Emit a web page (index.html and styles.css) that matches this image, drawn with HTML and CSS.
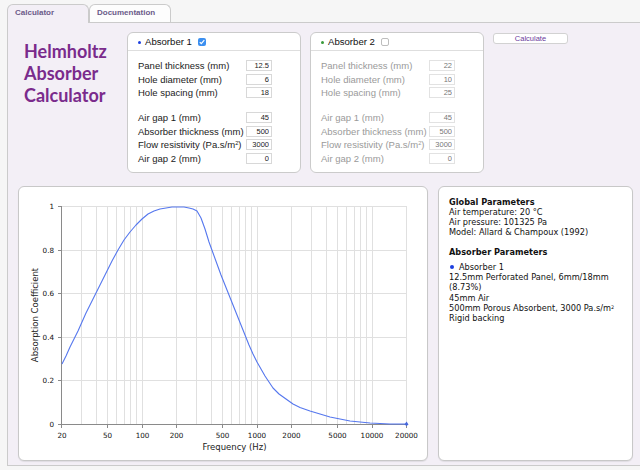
FILE: index.html
```html
<!DOCTYPE html>
<html>
<head>
<meta charset="utf-8">
<title>Helmholtz Absorber Calculator</title>
<link rel="stylesheet" href="styles.css">
</head>
<body>
<div class="tabs">
  <div class="tab active">Calculator</div>
  <div class="tab">Documentation</div>
</div>
<div class="main">
  <div class="top">
    <h1 class="title">Helmholtz<br>Absorber<br>Calculator</h1>

    <section class="absorber">
      <header class="ab-head"><span class="dot dot-blue"></span>Absorber 1<span class="cb cb-on"><svg width="8" height="8" viewBox="0 0 8 8"><path d="M1.8 4.1 L3.3 5.7 L6.3 2.2" stroke="#fff" stroke-width="1.2" fill="none"/></svg></span></header>
      <div class="ab-body">
        <div class="group">
          <div class="row"><span class="lbl">Panel thickness (mm)</span><input class="inp" value="12.5"></div>
          <div class="row"><span class="lbl">Hole diameter (mm)</span><input class="inp" value="6"></div>
          <div class="row"><span class="lbl">Hole spacing (mm)</span><input class="inp" value="18"></div>
        </div>
        <div class="group">
          <div class="row"><span class="lbl">Air gap 1 (mm)</span><input class="inp" value="45"></div>
          <div class="row"><span class="lbl">Absorber thickness (mm)</span><input class="inp" value="500"></div>
          <div class="row"><span class="lbl">Flow resistivity (Pa.s/m<sup>2</sup>)</span><input class="inp" value="3000"></div>
          <div class="row"><span class="lbl">Air gap 2 (mm)</span><input class="inp" value="0"></div>
        </div>
      </div>
    </section>

    <section class="absorber disabled">
      <header class="ab-head"><span class="dot dot-green"></span>Absorber 2<span class="cb cb-off"></span></header>
      <div class="ab-body">
        <div class="group">
          <div class="row"><span class="lbl">Panel thickness (mm)</span><input class="inp" value="22"></div>
          <div class="row"><span class="lbl">Hole diameter (mm)</span><input class="inp" value="10"></div>
          <div class="row"><span class="lbl">Hole spacing (mm)</span><input class="inp" value="25"></div>
        </div>
        <div class="group">
          <div class="row"><span class="lbl">Air gap 1 (mm)</span><input class="inp" value="45"></div>
          <div class="row"><span class="lbl">Absorber thickness (mm)</span><input class="inp" value="500"></div>
          <div class="row"><span class="lbl">Flow resistivity (Pa.s/m<sup>2</sup>)</span><input class="inp" value="3000"></div>
          <div class="row"><span class="lbl">Air gap 2 (mm)</span><input class="inp" value="0"></div>
        </div>
      </div>
    </section>

    <button class="calc">Calculate</button>
  </div>

  <div class="bottom">
    <div class="chart">
      <svg class="plot" width="408" height="273" viewBox="19 187 408 273">
        <g class="grid">
          <path d="M81.5 206V424M96.5 206V424M107.5 206V424M116.5 206V424M124.5 206V424M130.5 206V424M136.5 206V424M142.5 206V424M176.5 206V424M196.5 206V424M211.5 206V424M222.5 206V424M231.5 206V424M239.5 206V424M245.5 206V424M251.5 206V424M257.5 206V424M291.5 206V424M311.5 206V424M326.5 206V424M337.5 206V424M346.5 206V424M354.5 206V424M360.5 206V424M366.5 206V424M372.5 206V424M406.5 206V424"/>
          <path d="M62 206.5H407M62 250.5H407M62 293.5H407M62 337.5H407M62 380.5H407"/>
        </g>
        <g class="axis">
          <path d="M61.5 206V425M61 424.5H407"/>
          <path d="M58 206.5H62M58 250.5H62M58 293.5H62M58 337.5H62M58 380.5H62M58 424.5H62"/>
          <path d="M61.5 424V428M107.5 424V428M142.5 424V428M176.5 424V428M222.5 424V428M257.5 424V428M291.5 424V428M337.5 424V428M372.5 424V428M406.5 424V428"/>
        </g>
        <polyline class="curve" points="62,364 66,356 70,347 74,339 78,331 82,322 86,313 90,305 94,297 98,289 102,281 107,271 112,261 118,250 124,240 130,232 136,225 142,219 148,214 154,211 160,209 166,208 172,207 178,207 184,207 189,208 193,209 197,211 201,218 205,229 209,242 213,253 217,264 221,275 225,285 229,295 233,305 237,315 241,325 245,335 249,345 253,354 257,362 261,369 265,376 269,382 273,388 279,394 286,399 293,404 300,407.5 310,411 320,414 330,417 340,419 350,421 360,422 370,423 380,423.5 390,424 406,424"/>
        <path class="marker" d="M406.5 421.5L408.5 424.5L406.5 426L404.5 424.5Z"/>
        <g class="ylab">
          <text x="54" y="209">1</text>
          <text x="54" y="253">0.8</text>
          <text x="54" y="296">0.6</text>
          <text x="54" y="340">0.4</text>
          <text x="54" y="383">0.2</text>
          <text x="54" y="427">0</text>
        </g>
        <g class="xlab">
          <text x="62" y="437.5">20</text>
          <text x="107.5" y="437.5">50</text>
          <text x="142.5" y="437.5">100</text>
          <text x="176.5" y="437.5">200</text>
          <text x="222.5" y="437.5">500</text>
          <text x="257" y="437.5">1000</text>
          <text x="291.5" y="437.5">2000</text>
          <text x="337.5" y="437.5">5000</text>
          <text x="372" y="437.5">10000</text>
          <text x="406.5" y="437.5">20000</text>
        </g>
        <text class="atitle" x="234.5" y="449.5">Frequency (Hz)</text>
        <text class="atitle" transform="translate(37.5 315) rotate(-90)">Absorption Coefficient</text>
      </svg>
    </div>

    <div class="info">
      <div class="hd">Global Parameters</div>
      <div class="ln">Air temperature: 20 °C</div>
      <div class="ln">Air pressure: 101325 Pa</div>
      <div class="ln">Model: Allard &amp; Champoux (1992)</div>
      <div class="hd sec">Absorber Parameters</div>
      <div class="ln item"><span class="idot"></span>Absorber 1</div>
      <div class="ln">12.5mm Perforated Panel, 6mm/18mm</div>
      <div class="ln">(8.73%)</div>
      <div class="ln">45mm Air</div>
      <div class="ln">500mm Porous Absorbent, 3000 Pa.s/m<sup>2</sup></div>
      <div class="ln">Rigid backing</div>
    </div>
  </div>
</div>
</body>
</html>
```
FILE: styles.css
```css
* { box-sizing: border-box; }

body {
  margin: 0;
  background: #f6f6f6;
  font-family: "Liberation Sans", Arial, sans-serif;
  color: #222;
  overflow: hidden;
}

/* tabs */
.tabs {
  display: flex;
  align-items: flex-start;
  height: 22px;
  padding: 4px 0 0 7px;
}
.tab {
  width: 82px;
  height: 18px;
  border: 1px solid #cbcbcb;
  border-bottom: none;
  border-radius: 6px 6px 0 0;
  background: #fdfdfd;
  padding: 3px 0 0 7px;
  font-size: 8px;
  line-height: 10px;
  font-weight: bold;
  color: #6b5b89;
}
.tab.active {
  height: 19px;
  background: #f3eff6;
  position: relative;
  z-index: 1;
}

/* main area */
.main {
  margin-left: 7px;
  height: 444px;
  border: 1px solid #cbcbcb;
  border-right: none;
  background: #f3eff6;
  padding: 9px 0 4px 10px;
}

.top {
  display: flex;
  align-items: flex-start;
  height: 141px;
}
.title {
  width: 109px;
  margin: 8px 0 0;
  padding-left: 6px;
  font-family: Lato, "Liberation Sans", sans-serif;
  font-weight: bold;
  font-size: 18px;
  line-height: 22px;
  color: #7a2b8c;
}

.absorber {
  width: 174px;
  height: 141px;
  margin-right: 9px;
  background: #fff;
  border: 1px solid #cbcbcb;
  border-radius: 6px;
}
.ab-head {
  height: 18px;
  border-bottom: 1px solid #dedede;
  display: flex;
  align-items: center;
  padding-left: 10px;
  font-size: 9.6px;
  color: #111;
}
.dot {
  width: 3px;
  height: 3px;
  border-radius: 50%;
  margin: 1px 4px 0 0;
}
.dot-blue { background: #1c3fe0; }
.dot-green { background: #3a9a3a; }
.cb {
  width: 8px;
  height: 8px;
  margin-left: 6px;
  border-radius: 2px;
  display: inline-flex;
}
.cb-on { background: #3b8ff0; }
.cb-off { background: #fff; border: 1px solid #bdbdbd; }

.ab-body {
  padding: 8px 28px 0 10px;
}
.group + .group { margin-top: 11.5px; }
.row {
  height: 13.5px;
  display: flex;
  align-items: center;
}
.lbl {
  flex: 1;
  font-size: 9.5px;
  white-space: nowrap;
}
.lbl sup, .ln sup {
  font-size: 60%;
  line-height: 0;
  vertical-align: 0.45em;
}
.inp {
  width: 26px;
  height: 11px;
  margin: 0;
  padding: 0 2px 0 0;
  border: 1px solid #d8d8d8;
  background: #fff;
  font-family: "Liberation Sans", Arial, sans-serif;
  font-size: 7.5px;
  text-align: right;
  color: #222;
  outline: none;
}
.disabled .lbl { color: #9a9a9a; }
.disabled .inp { color: #777; border-color: #e2e2e2; }

.calc {
  width: 75px;
  height: 11px;
  margin-top: 1px;
  padding: 0;
  border: 1px solid #d2d2d2;
  border-radius: 3px;
  background: #fff;
  font-family: "Liberation Sans", Arial, sans-serif;
  font-size: 7.5px;
  line-height: 9px;
  color: #6a3a9c;
}

/* bottom */
.bottom {
  display: flex;
  gap: 10px;
  margin-top: 13px;
  height: 275px;
}
.chart {
  width: 410px;
  height: 275px;
  background: #fff;
  border: 1px solid #c8c8c8;
  border-radius: 6px;
  box-shadow: 0 1px 1px rgba(0,0,0,0.08);
}
.plot { display: block; }
.grid path { stroke: #e0e0e0; stroke-width: 1; fill: none; }
.axis path { stroke: #8a8a8a; stroke-width: 1; fill: none; }
.curve {
  fill: none;
  stroke: #5577ee;
  stroke-width: 1.1;
  stroke-linejoin: round;
}
.marker { fill: #4466dd; }
.ylab text, .xlab text {
  font-family: "DejaVu Sans", Verdana, sans-serif;
  font-size: 7.2px;
  fill: #111;
}
.ylab text { text-anchor: end; }
.xlab text { text-anchor: middle; }
.atitle {
  font-family: "DejaVu Sans", Verdana, sans-serif;
  font-size: 8.5px;
  fill: #222;
  text-anchor: middle;
}

.info {
  width: 195px;
  height: 275px;
  background: #fff;
  border: 1px solid #c8c8c8;
  border-radius: 6px;
  box-shadow: 0 1px 1px rgba(0,0,0,0.08);
  padding: 9.5px 10px;
  font-family: "DejaVu Sans", Verdana, sans-serif;
  font-size: 8.2px;
  line-height: 10.3px;
  color: #111;
}
.hd { font-weight: bold; }
.hd.sec { margin-top: 9px; }
.ln { white-space: nowrap; }
.item { margin-top: 4.7px; display: flex; align-items: center; }
.idot {
  width: 4px;
  height: 4px;
  border-radius: 50%;
  background: #1c3fe0;
  margin: 0 5px 0 1px;
}
```
